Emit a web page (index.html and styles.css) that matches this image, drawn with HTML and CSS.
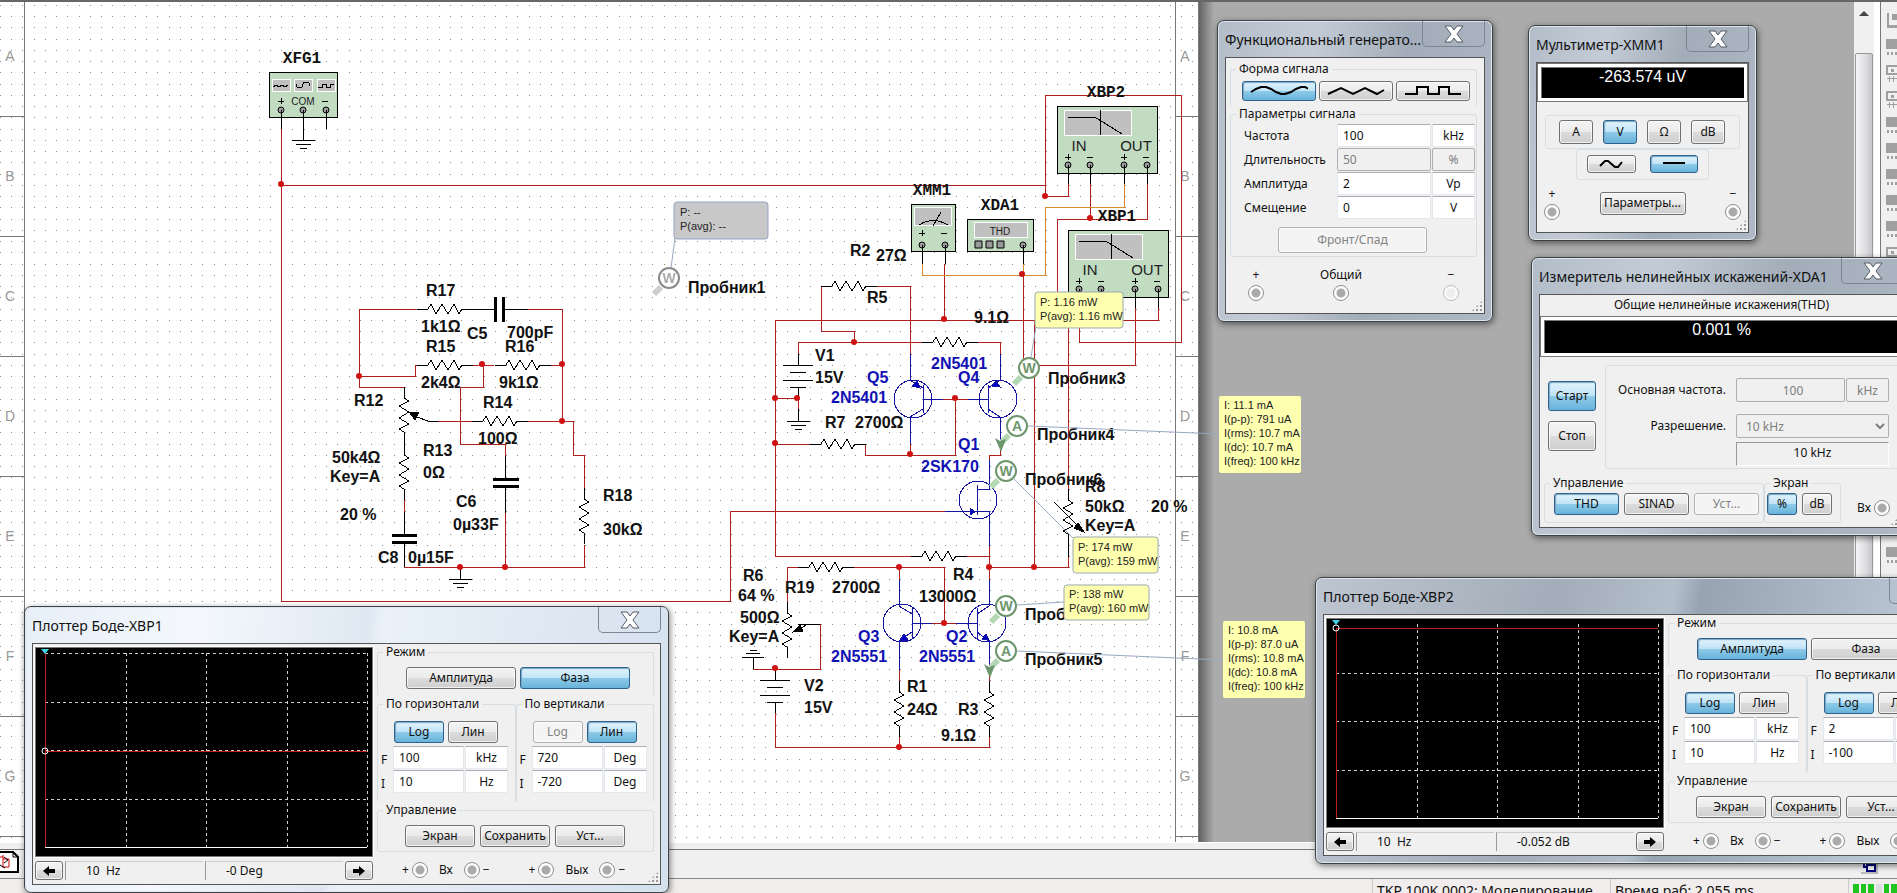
FILE: index.html
```
<!DOCTYPE html>
<html lang="ru">
<head>
    <meta charset="UTF-8">
    <meta name="viewport" content="width=device-width, initial-scale=1.0">
    <title>TKP 100K 0002</title>
    <link rel="stylesheet" href="styles.css">
</head>
<body>
    <div class="workspace">
        <main class="canvas">
            <svg class="schematic" width="1320" height="843" viewBox="0 0 1320 843">
                <defs>
                    <pattern id="dots" width="45" height="45" patternUnits="userSpaceOnUse">
                        <path class="dot" d="M0 5h1M11 5h1M22 5h1M34 5h1M0 16h1M11 16h1M22 16h1M34 16h1M0 27h1M11 27h1M22 27h1M34 27h1M0 39h1M11 39h1M22 39h1M34 39h1"/>
                    </pattern>
                    <linearGradient id="edge">
                        <stop offset="0" stop-color="#5e5e5e"/>
                        <stop offset="1" stop-color="#ababab"/>
                    </linearGradient>
                    <path id="rh" d="M-11 0H0l3-5 5 10 6-10 6 10 6-10 5 10 3-5h11"/>
                    <path id="rv" d="M0-11V0l5 3-10 5 10 6-10 6 10 6-10 5 5 3v11"/>
                    <g id="gnd"><path d="M0-12V0M-11 0h23M-7 4h15M-3 8h7"/></g>
                    <g id="batt"><path d="M0-11V0M-15 0h30M-8 7h16M-15 15h30M-8 22h16M0 22v11"/></g>
                    <g id="pin"><circle r="3" class="pin"/><path d="M0 0v19"/></g>
                    <g id="mag">
                        <path class="handle" d="M-8 9L-15 16"/>
                        <circle class="lens" r="10"/>
                    </g>
                    <g id="bode">
                        <rect class="inst" width="100" height="67"/>
                        <rect class="screen" x="7" y="4" width="67" height="25"/>
                        <path d="M11 11h26l4 2 24 15M43 4v25"/>
                        <path d="M8 51h6M11 48v6M30 51h6M64 51h6M67 48v6M86 51h6"/>
                        <use href="#pin" x="11" y="59"/>
                        <use href="#pin" x="33" y="59"/>
                        <use href="#pin" x="67" y="59"/>
                        <use href="#pin" x="90" y="59"/>
                    </g>
                </defs>

                <rect width="1198" height="843" fill="#fff"/>
                <rect width="1198" height="843" fill="url(#dots)"/>
                <rect x="1198" width="16" height="843" fill="url(#edge)"/>

                <!-- sheet frame -->
                <path class="frame" d="M24 2V836M0 116h24M0 236h24M0 356h24M0 476h24M0 596h24M0 716h24M0 836h24M1175 2V843M1175 116h23M1175 236h23M1175 356h23M1175 476h23M1175 596h23M1175 716h23M1175 836h23M1198 2V843"/>
                <g class="zone">
                    <text x="10" y="61">A</text><text x="10" y="181">B</text><text x="10" y="301">C</text><text x="10" y="421">D</text><text x="10" y="541">E</text><text x="10" y="661">F</text><text x="10" y="781">G</text>
                    <text x="1185" y="61">A</text><text x="1185" y="181">B</text><text x="1185" y="301">C</text><text x="1185" y="421">D</text><text x="1185" y="541">E</text><text x="1185" y="661">F</text><text x="1185" y="781">G</text>
                </g>

                <!-- instruments -->
                <g class="part">
                    <rect class="inst" x="269" y="72" width="68" height="45"/>
                    <rect class="screen" x="272" y="79" width="18" height="12"/>
                    <rect class="screen" x="294" y="79" width="18" height="12"/>
                    <rect class="screen" x="317" y="79" width="18" height="12"/>
                    <path d="M273 87l3-2 3 2 3-2 3 2 3-2M296 84q0 4 4 4q3 0 3-4q0-2 4-2q3 0 3 4M318 87h4v-3h4v3h4v-3h4M278 101h6M281 98v6M322 101h6"/>
                    <use href="#pin" x="281" y="110"/>
                    <use href="#pin" x="303" y="110"/>
                    <use href="#pin" x="326" y="110"/>
                    <use href="#gnd" x="303" y="140"/>

                    <rect class="inst" x="911" y="204" width="44" height="47"/>
                    <rect class="screen" x="914" y="207" width="37" height="18"/>
                    <path d="M919 225q14-9 29 0M933 226l8-14M919 233h6M922 230v6M941 233h6"/>
                    <use href="#pin" x="922" y="245"/>
                    <use href="#pin" x="945" y="245"/>

                    <rect class="inst" x="967" y="219" width="66" height="32"/>
                    <rect class="screen" x="974" y="222" width="53" height="15"/>
                    <path class="key" d="M975 241h7v7h-7zM986 241h7v7h-7zM997 241h7v7h-7z"/>
                    <use href="#pin" x="1023" y="245"/>

                    <use href="#bode" x="1057" y="106"/>
                    <use href="#bode" x="1068" y="230"/>
                </g>

                <!-- wires -->
                <g class="wire">
                    <path d="M281 129V601H730V511H946M281 185H1045"/>
                    <path d="M1181 95H1045V196H1068V184M1181 95V342H1079V308"/>
                    <path d="M1090 184V219M1057 310V219H1147V184M944 264V320M1158 308V320H775V556H911M1034 320V567M1068 300V490"/>
                    <path d="M1023 275V365H1135V308"/>
                    <path d="M821 286V331H854V342M877 286H910V354M798 354V342H923M977 342H1000V354"/>
                    <path d="M775 398H798V410M775 444H810M865 444V455H955V399M943 399H968M910 442V455"/>
                    <path d="M1000 446V455H989V470M967 556H989M989 546V580M989 567H1068V556M899 580V567H944V623M854 567H899M787 602V567H799M932 623H956"/>
                    <path d="M820 624V669H775M753 669H775M775 712V747H989V736M899 670V682M899 736V747M989 672V682"/>
                    <path d="M404 387H359V309H416M359 376H415V365H418M472 365H494M483 365V387H460V444H505V456M528 309H562V421H573V455H584V488M550 365H562M438 421H473M528 421H562M404 567H584V545M505 512V567M404 500V513"/>
                </g>
                <path class="wire orange" d="M922 264V275H1045V207H1124V184M1023 264V275"/>

                <!-- parts -->
                <g class="part">
                    <use href="#rh" x="428" y="309"/>
                    <use href="#rh" x="428" y="365"/>
                    <use href="#rh" x="506" y="365"/>
                    <use href="#rh" x="483" y="421"/>
                    <use href="#rv" x="404" y="398"/>
                    <use href="#rv" x="404" y="455"/>
                    <use href="#rv" x="584" y="499"/>
                    <path d="M461 309h34M504 309h24M404 432v23M404 512v22M404 543v24M505 456v22M505 487v26M414 416l14 5h10"/>
                    <path class="plate" d="M495 297v25M503 297v25M392 535h25M392 542h25M493 479h26M493 486h26"/>
                    <path class="tip" d="M409 412l10 0-4 8z"/>
                    <use href="#gnd" x="460" y="579"/>

                    <use href="#rh" x="832" y="286"/>
                    <use href="#rh" x="933" y="342"/>
                    <use href="#rh" x="821" y="444"/>
                    <use href="#rh" x="922" y="556"/>
                    <use href="#rh" x="809" y="567"/>
                    <use href="#rv" x="1068" y="500"/>
                    <use href="#rv" x="787" y="613"/>
                    <use href="#rv" x="899" y="692"/>
                    <use href="#rv" x="989" y="692"/>
                    <use href="#batt" x="798" y="365"/>
                    <use href="#batt" x="775" y="680"/>
                    <use href="#gnd" x="798" y="421"/>
                    <path d="M753 669v-11M742 657h22M746 653h14M750 650h7M798 624l10 0h12M808 624l-12 7M1068 545v12M1054 502l26 26"/>
                    <path class="tip" d="M793 632l7-7 3 6zM1084 532l-10-4 4-5z"/>
                </g>

                <!-- transistors -->
                <g class="semi">
                    <circle cx="913" cy="399" r="19"/>
                    <path d="M910 354V380L923 388M923 385V413M923 409L910 417V444M923 399H943"/>
                    <path class="tip" d="M912 386l8 2-3-7z"/>
                    <circle cx="998" cy="399" r="19"/>
                    <path d="M1000 354V380L988 388M988 385V413M988 409L1000 417V440M968 399H988"/>
                    <path class="tip" d="M992 386l8 1-4-6z"/>
                    <circle cx="978" cy="500" r="19"/>
                    <path d="M989 460V489H977M977 485V515M945 511H989V546"/>
                    <path class="tip" d="M970 508v7l5-3z"/>
                    <circle cx="902" cy="623" r="19"/>
                    <path d="M899 580V606L912 614M912 608V639M912 632L899 641V670M912 623H932"/>
                    <path class="tip" d="M900 640l8 0-4-6z"/>
                    <circle cx="987" cy="623" r="19"/>
                    <path d="M989 580V606L977 614M977 608V639M977 632L989 641V666M956 623H977"/>
                    <path class="tip" d="M989 640l-7-1 4-5z"/>
                </g>

                <g class="node">
                    <circle cx="281" cy="184" r="3"/><circle cx="359" cy="376" r="3"/><circle cx="482" cy="364" r="3"/><circle cx="562" cy="364" r="3"/><circle cx="562" cy="421" r="3"/><circle cx="460" cy="567" r="3"/><circle cx="505" cy="567" r="3"/>
                    <circle cx="1045" cy="196" r="3"/><circle cx="1090" cy="218" r="3"/><circle cx="1022" cy="274" r="3"/><circle cx="944" cy="319" r="3"/><circle cx="854" cy="342" r="3"/><circle cx="775" cy="398" r="3"/><circle cx="797" cy="398" r="3"/>
                    <circle cx="775" cy="443" r="3"/><circle cx="910" cy="454" r="3"/><circle cx="955" cy="398" r="3"/><circle cx="989" cy="567" r="3"/><circle cx="1034" cy="567" r="3"/><circle cx="899" cy="567" r="3"/><circle cx="944" cy="623" r="3"/><circle cx="775" cy="668" r="3"/><circle cx="899" cy="747" r="3"/>
                </g>

                <!-- captions -->
                <g class="mono">
                    <text x="302" y="63">XFG1</text>
                    <text x="932" y="195">XMM1</text>
                    <text x="1000" y="210">XDA1</text>
                    <text x="1106" y="97">XBP2</text>
                    <text x="1117" y="221">XBP1</text>
                </g>
                <g class="inst-text">
                    <text class="small" x="303" y="105">COM</text>
                    <text class="small" x="1000" y="235">THD</text>
                    <text x="1079" y="151">IN</text><text x="1136" y="151">OUT</text>
                    <text x="1090" y="275">IN</text><text x="1147" y="275">OUT</text>
                </g>
                <g class="label">
                    <text x="426" y="296">R17</text><text x="421" y="332">1k1Ω</text><text x="467" y="339">C5</text><text x="507" y="338">700pF</text>
                    <text x="426" y="352">R15</text><text x="505" y="352">R16</text><text x="421" y="388">2k4Ω</text><text x="499" y="388">9k1Ω</text>
                    <text x="354" y="406">R12</text><text x="483" y="408">R14</text><text x="478" y="444">100Ω</text><text x="423" y="456">R13</text>
                    <text x="423" y="478">0Ω</text><text x="332" y="463">50k4Ω</text><text x="330" y="482">Key=A</text><text x="340" y="520">20 %</text>
                    <text x="456" y="507">C6</text><text x="453" y="530">0µ33F</text><text x="378" y="563">C8</text><text x="408" y="563">0µ15F</text>
                    <text x="603" y="501">R18</text><text x="603" y="535">30kΩ</text>
                    <text x="850" y="256">R2</text><text x="876" y="261">27Ω</text><text x="867" y="303">R5</text><text x="974" y="323">9.1Ω</text>
                    <text x="815" y="361">V1</text><text x="815" y="383">15V</text><text x="825" y="428">R7</text><text x="855" y="428">2700Ω</text>
                    <text x="1085" y="492">R8</text><text x="1085" y="512">50kΩ</text><text x="1151" y="512">20 %</text><text x="1085" y="531">Key=A</text>
                    <text x="743" y="581">R6</text><text x="738" y="601">64 %</text><text x="740" y="623">500Ω</text><text x="729" y="642">Key=A</text>
                    <text x="785" y="593">R19</text><text x="832" y="593">2700Ω</text><text x="953" y="580">R4</text><text x="919" y="602">13000Ω</text>
                    <text x="804" y="691">V2</text><text x="804" y="713">15V</text><text x="907" y="692">R1</text><text x="907" y="715">24Ω</text>
                    <text x="958" y="715">R3</text><text x="941" y="741">9.1Ω</text>
                    <text x="688" y="293">Пробник1</text><text x="1048" y="384">Пробник3</text><text x="1037" y="440">Пробник4</text>
                    <text x="1025" y="485">Пробник6</text><text x="1025" y="620">Пробник2</text><text x="1025" y="665">Пробник5</text>
                </g>
                <g class="label blue">
                    <text x="867" y="383">Q5</text><text x="831" y="403">2N5401</text><text x="931" y="369">2N5401</text><text x="958" y="383">Q4</text>
                    <text x="958" y="450">Q1</text><text x="921" y="472">2SK170</text>
                    <text x="858" y="642">Q3</text><text x="831" y="662">2N5551</text><text x="946" y="642">Q2</text><text x="919" y="662">2N5551</text>
                </g>

                <!-- probes -->
                <path class="leader" d="M675 238L671 268M1036 327L1031 357M1028 426L1219 434M1014 479L1074 539M1017 605L1064 602M1017 651L1223 660"/>
                <g class="probe off">
                    <use href="#mag" x="669" y="278"/><text x="669" y="283">W</text>
                </g>
                <g class="probe">
                    <use href="#mag" x="1029" y="368"/><text x="1029" y="373">W</text>
                    <use href="#mag" x="1017" y="426"/><text x="1017" y="431">A</text>
                    <use href="#mag" x="1006" y="471"/><text x="1006" y="476">W</text>
                    <use href="#mag" x="1006" y="606"/><text x="1006" y="611">W</text>
                    <use href="#mag" x="1006" y="651"/><text x="1006" y="656">A</text>
                    <path class="dir" d="M995 438l5 3 6-2-5 13zM984 664l5 3 6-2-5 13z"/>
                </g>
                <g class="note">
                    <rect class="idle" x="674" y="202" width="94" height="37" rx="3"/>
                    <text x="680" y="216">P: --</text><text x="680" y="230">P(avg): --</text>
                    <rect x="1035" y="292" width="88" height="36" rx="3"/>
                    <text x="1040" y="306">P: 1.16 mW</text><text x="1040" y="320">P(avg): 1.16 mW</text>
                    <rect x="1073" y="537" width="85" height="36" rx="3"/>
                    <text x="1078" y="551">P: 174 mW</text><text x="1078" y="565">P(avg): 159 mW</text>
                    <rect x="1064" y="585" width="85" height="35" rx="3"/>
                    <text x="1069" y="598">P: 138 mW</text><text x="1069" y="612">P(avg): 160 mW</text>
                    <rect class="plain" x="1219" y="396" width="82" height="77" rx="2"/>
                    <text x="1224" y="409">I: 11.1 mA</text><text x="1224" y="423">I(p-p): 791 uA</text><text x="1224" y="437">I(rms): 10.7 mA</text><text x="1224" y="451">I(dc): 10.7 mA</text><text x="1224" y="465">I(freq): 100 kHz</text>
                    <rect class="plain" x="1223" y="621" width="82" height="77" rx="2"/>
                    <text x="1228" y="634">I: 10.8 mA</text><text x="1228" y="648">I(p-p): 87.0 uA</text><text x="1228" y="662">I(rms): 10.8 mA</text><text x="1228" y="676">I(dc): 10.8 mA</text><text x="1228" y="690">I(freq): 100 kHz</text>
                </g>
            </svg>
        </main>
        <div class="scrollbar">
            <svg width="10" height="6" viewBox="0 0 10 6"><path d="M0 6l5-5 5 5z" fill="#444"/></svg>
            <div class="thumb"></div>
        </div>
        <aside class="instruments">
            <svg width="16" height="560" viewBox="0 0 16 560">
                <defs>
                    <g id="tool"><path d="M0 0h16v10H0zM1 13h2v3H1zM5 13h2v3H5zM9 13h2v3H9z"/></g>
                    <g id="tool2"><path d="M0 0h12v2H2v6h10v2H0zM5 4h3v3H5zM1 13h16v1H1zM3 11h1v6H3zM7 11h1v6H7z"/></g>
                </defs>
                <g fill="#a0a0a0">
                    <path d="M1 0h2v12h12v3H1zM6 1h10v6H6z"/>
                    <use href="#tool" y="26"/><use href="#tool2" y="52"/><use href="#tool2" y="78"/><use href="#tool" y="104"/><use href="#tool" y="130"/><use href="#tool" y="156"/><use href="#tool" y="182"/><use href="#tool" y="208"/><use href="#tool2" y="234"/><use href="#tool" y="534"/>
                </g>
            </svg>
        </aside>
    </div>

    <div class="tabs">
        <svg width="20" height="22" viewBox="0 0 20 22">
            <path d="M0 1h13l5 5v15H0" fill="#fff" stroke="#000" stroke-width="2"/>
            <path d="M13 1v5h5" fill="none" stroke="#000"/>
            <path d="M3 4v13M3 8h6v8h-5M0 6h3" fill="none" stroke="#c00"/>
            <path d="M4 6l4 3-4 3M0 14l5 3" fill="none" stroke="#000"/>
        </svg>
        <svg class="restore" width="17" height="13" viewBox="0 0 17 13">
            <path d="M3 1h8M3 1v5h3M6 4h8v6H6z" fill="#fff" stroke="#00007b" stroke-width="2"/>
            <path d="M0 12h16M16 0v13" stroke="#888"/>
        </svg>
    </div>
    <footer class="status">
        <span class="cell name">TKP 100K 0002: Моделирование</span>
        <span class="cell time">Время раб: 2.055 ms</span>
        <span class="cell meter"><i></i><i></i><i></i><i class="empty"></i><i></i><i></i></span>
    </footer>

    <section class="window bode xbp1">
        <header class="titlebar">
            <h2>Плоттер Боде-XBP1</h2>
            <button class="close" aria-label="Закрыть"><svg width="20" height="18" viewBox="0 0 20 18"><path d="M1 1h6l3 4 3-4h6l-6 8 6 8h-6l-3-4-3 4H1l6-8z"/></svg></button>
        </header>
        <div class="client">
            <div class="plot-side">
                <div class="plot">
                    <svg width="334" height="206" viewBox="0 0 334 206">
                        <path class="grid" d="M89 4V198M169 4V198M250 4V198M330 4V198M8 4H330M8 53H330M8 101H330M8 150H330"/>
                        <path class="axis" d="M8 198H330"/>
                        <path class="trace" d="M8 4V198M8 102H330"/>
                        <path class="cursor" d="M4 0h8l-4 5z"/>
                        <circle class="mark" cx="8" cy="102" r="3"/>
                    </svg>
                </div>
                <div class="readout">
                    <button aria-label="Влево"><svg width="12" height="10" viewBox="0 0 12 10"><path d="M0 5l6-5v3h6v4H6v3z"/></svg></button>
                    <output class="freq">10&nbsp; Hz</output>
                    <output class="value">-0 Deg</output>
                    <button aria-label="Вправо"><svg width="12" height="10" viewBox="0 0 12 10"><path d="M12 5L6 0v3H0v4h6v3z"/></svg></button>
                </div>
            </div>
            <div class="controls">
                <fieldset class="mode">
                    <legend>Режим</legend>
                    <div class="buttons"><button>Амплитуда</button><button class="on">Фаза</button></div>
                </fieldset>
                <div class="axes">
                    <fieldset>
                        <legend>По горизонтали</legend>
                        <div class="buttons"><button class="on">Log</button><button>Лин</button></div>
                        <div class="range"><label for="b1hf">F</label><input id="b1hf" value="100"><input class="unit" aria-label="Единица" value="kHz"></div>
                        <div class="range"><label for="b1hi">I</label><input id="b1hi" value="10"><input class="unit" aria-label="Единица" value="Hz"></div>
                    </fieldset>
                    <fieldset>
                        <legend>По вертикали</legend>
                        <div class="buttons"><button disabled>Log</button><button class="on">Лин</button></div>
                        <div class="range"><label for="b1vf">F</label><input id="b1vf" value="720"><input class="unit" aria-label="Единица" value="Deg"></div>
                        <div class="range"><label for="b1vi">I</label><input id="b1vi" value="-720"><input class="unit" aria-label="Единица" value="Deg"></div>
                    </fieldset>
                </div>
                <fieldset class="manage">
                    <legend>Управление</legend>
                    <div class="buttons"><button>Экран</button><button>Сохранить</button><button>Уст...</button></div>
                </fieldset>
                <div class="ports">
                    <span class="port">+<i class="jack"></i></span><span>Вх</span><span class="port"><i class="jack"></i>−</span>
                    <span class="port second">+<i class="jack"></i></span><span>Вых</span><span class="port"><i class="jack"></i>−</span>
                </div>
            </div>
        </div>
    </section>

    <section class="window xfg">
        <header class="titlebar">
            <h2>Функциональный генерато...</h2>
            <button class="close" aria-label="Закрыть"><svg width="20" height="18" viewBox="0 0 20 18"><path d="M1 1h6l3 4 3-4h6l-6 8 6 8h-6l-3-4-3 4H1l6-8z"/></svg></button>
        </header>
        <div class="client">
            <fieldset class="shape">
                <legend>Форма сигнала</legend>
                <div class="buttons">
                    <button class="on" aria-label="Синус"><svg width="58" height="10" viewBox="0 0 58 10"><path d="M1 6l5-3 5-2h5l5 2 5 3 5 2h4l6-2 5-3 5-2h4l4 2 3 2"/></svg></button>
                    <button aria-label="Треугольник"><svg width="58" height="10" viewBox="0 0 58 10"><path d="M1 8l13-6 12 6 12-6 12 6 7-4"/></svg></button>
                    <button aria-label="Прямоугольник"><svg width="58" height="10" viewBox="0 0 58 10"><path d="M1 8h12V1h11v7h11V1h10v7h12"/></svg></button>
                </div>
            </fieldset>
            <fieldset class="params">
                <legend>Параметры сигнала</legend>
                <div class="row"><label for="freq">Частота</label><input id="freq" value="100"><input class="unit" aria-label="Единица" value="kHz"></div>
                <div class="row"><label for="duty">Длительность</label><input id="duty" value="50" disabled><input class="unit" aria-label="Единица" value="%" disabled></div>
                <div class="row"><label for="amp">Амплитуда</label><input id="amp" value="2"><input class="unit" aria-label="Единица" value="Vp"></div>
                <div class="row"><label for="offset">Смещение</label><input id="offset" value="0"><input class="unit" aria-label="Единица" value="V"></div>
                <button class="wide" disabled>Фронт/Спад</button>
            </fieldset>
            <div class="terminals">
                <span class="terminal">+<i class="jack"></i></span>
                <span class="terminal common">Общий<i class="jack"></i></span>
                <span class="terminal">−<i class="jack free"></i></span>
            </div>
        </div>
    </section>

    <section class="window xmm">
        <header class="titlebar">
            <h2>Мультиметр-XMM1</h2>
            <button class="close" aria-label="Закрыть"><svg width="20" height="18" viewBox="0 0 20 18"><path d="M1 1h6l3 4 3-4h6l-6 8 6 8h-6l-3-4-3 4H1l6-8z"/></svg></button>
        </header>
        <div class="client">
            <output class="display">-263.574 uV</output>
            <div class="box units"><button>A</button><button class="on">V</button><button>Ω</button><button>dB</button></div>
            <div class="box signal">
                <button aria-label="Переменный"><svg width="24" height="10" viewBox="0 0 24 10"><path d="M1 7l5-5h3l7 6h3l4-5"/></svg></button>
                <button class="on" aria-label="Постоянный"><svg width="24" height="10" viewBox="0 0 24 10"><path d="M1 4h22"/></svg></button>
            </div>
            <div class="terminals">
                <span class="terminal">+<i class="jack"></i></span>
                <button>Параметры...</button>
                <span class="terminal">−<i class="jack"></i></span>
            </div>
        </div>
    </section>

    <section class="window xda">
        <header class="titlebar">
            <h2>Измеритель нелинейных искажений-XDA1</h2>
            <button class="close" aria-label="Закрыть"><svg width="20" height="18" viewBox="0 0 20 18"><path d="M1 1h6l3 4 3-4h6l-6 8 6 8h-6l-3-4-3 4H1l6-8z"/></svg></button>
        </header>
        <div class="client">
            <div class="caption">Общие нелинейные искажения(THD)</div>
            <output class="display">0.001 %</output>
            <div class="middle">
                <div class="run"><button class="on">Старт</button><button>Стоп</button></div>
                <div class="box settings">
                    <div class="row"><label for="base">Основная частота.</label><input id="base" value="100" disabled><input class="unit" aria-label="Единица" value="kHz" disabled></div>
                    <div class="row"><label for="res">Разрешение.</label><select id="res" disabled><option>10 kHz</option></select></div>
                    <output class="actual">10 kHz</output>
                </div>
            </div>
            <div class="bottom">
                <fieldset class="kind">
                    <legend>Управление</legend>
                    <div class="buttons"><button class="on">THD</button><button>SINAD</button><button disabled>Уст...</button></div>
                </fieldset>
                <fieldset class="screen-unit">
                    <legend>Экран</legend>
                    <div class="buttons"><button class="on">%</button><button>dB</button></div>
                </fieldset>
                <span class="port">Вх<i class="jack"></i></span>
            </div>
        </div>
    </section>

    <section class="window bode xbp2">
        <header class="titlebar">
            <h2>Плоттер Боде-XBP2</h2>
            <button class="close" aria-label="Закрыть"><svg width="20" height="18" viewBox="0 0 20 18"><path d="M1 1h6l3 4 3-4h6l-6 8 6 8h-6l-3-4-3 4H1l6-8z"/></svg></button>
        </header>
        <div class="client">
            <div class="plot-side">
                <div class="plot">
                    <svg width="334" height="206" viewBox="0 0 334 206">
                        <path class="grid" d="M89 4V198M169 4V198M250 4V198M330 4V198M8 53H330M8 101H330M8 150H330"/>
                        <path class="axis" d="M8 198H330"/>
                        <path class="trace" d="M8 8V198M8 8H330"/>
                        <path class="cursor" d="M4 0h8l-4 5z"/>
                        <circle class="mark" cx="8" cy="8" r="3"/>
                    </svg>
                </div>
                <div class="readout">
                    <button aria-label="Влево"><svg width="12" height="10" viewBox="0 0 12 10"><path d="M0 5l6-5v3h6v4H6v3z"/></svg></button>
                    <output class="freq">10&nbsp; Hz</output>
                    <output class="value">-0.052 dB</output>
                    <button aria-label="Вправо"><svg width="12" height="10" viewBox="0 0 12 10"><path d="M12 5L6 0v3H0v4h6v3z"/></svg></button>
                </div>
            </div>
            <div class="controls">
                <fieldset class="mode">
                    <legend>Режим</legend>
                    <div class="buttons"><button class="on">Амплитуда</button><button>Фаза</button></div>
                </fieldset>
                <div class="axes">
                    <fieldset>
                        <legend>По горизонтали</legend>
                        <div class="buttons"><button class="on">Log</button><button>Лин</button></div>
                        <div class="range"><label for="b2hf">F</label><input id="b2hf" value="100"><input class="unit" aria-label="Единица" value="kHz"></div>
                        <div class="range"><label for="b2hi">I</label><input id="b2hi" value="10"><input class="unit" aria-label="Единица" value="Hz"></div>
                    </fieldset>
                    <fieldset>
                        <legend>По вертикали</legend>
                        <div class="buttons"><button class="on">Log</button><button>Лин</button></div>
                        <div class="range"><label for="b2vf">F</label><input id="b2vf" value="2"><input class="unit" aria-label="Единица" value="dB"></div>
                        <div class="range"><label for="b2vi">I</label><input id="b2vi" value="-100"><input class="unit" aria-label="Единица" value="dB"></div>
                    </fieldset>
                </div>
                <fieldset class="manage">
                    <legend>Управление</legend>
                    <div class="buttons"><button>Экран</button><button>Сохранить</button><button>Уст...</button></div>
                </fieldset>
                <div class="ports">
                    <span class="port">+<i class="jack"></i></span><span>Вх</span><span class="port"><i class="jack"></i>−</span>
                    <span class="port second">+<i class="jack"></i></span><span>Вых</span><span class="port"><i class="jack"></i>−</span>
                </div>
            </div>
        </div>
    </section>
</body>
</html>
```

FILE: styles.css
```
* {
    box-sizing: border-box;
    margin: 0;
    padding: 0;
}

body {
    display: flex;
    flex-direction: column;
    height: 100vh;
    overflow: hidden;
    position: relative;
    background: #f0f0f0;
    color: #111;
    font: 12px/16px "Noto Sans", sans-serif;
}

svg {
    display: block;
}

/* workspace */
.workspace {
    flex: 1;
    display: flex;
    min-height: 0;
    border-top: 2px solid #666;
    border-bottom: 1px solid #fff;
}

.canvas {
    flex: 1;
    min-width: 0;
    overflow: hidden;
    background: #ababab;
}

.schematic {
    margin-top: -2px;
}

.scrollbar {
    display: flex;
    flex-direction: column;
    align-items: center;
    gap: 37px;
    width: 20px;
    padding: 8px 1px 0;
    background: #f0f0f0;
}

.thumb {
    flex: 1;
    width: 18px;
    border: 1px solid #999;
    border-radius: 2px;
    background: linear-gradient(90deg, #f5f5f5, #e4e4e8 45%, #c6c6cc);
}

.instruments {
    width: 23px;
    padding: 11px 0 0 6px;
    background: #f0f0f0;
    border-left: 6px solid #fff;
    box-shadow: inset 1px 0 #777;
    overflow: hidden;
}

.tabs {
    display: flex;
    justify-content: space-between;
    height: 36px;
    padding: 2px 19px 0 0;
    border-top: 6px solid #f0f0f0;
    border-bottom: 1px solid #888;
    box-shadow: inset 0 1px #777;
}

.restore {
    margin-top: 10px;
}

.status {
    display: flex;
    justify-content: flex-end;
    height: 14px;
    overflow: hidden;
    background: #f0edec;
    font-size: 14px;
    line-height: 24px;
}

.cell {
    border-left: 1px solid #ccc;
    padding-left: 4px;
    white-space: nowrap;
}

.cell.name {
    width: 238px;
}

.cell.time {
    width: 238px;
}

.cell.meter {
    display: flex;
    gap: 2px;
    width: 49px;
    padding-top: 5px;
}

.meter i {
    width: 6px;
    height: 12px;
    background: #1fc41f;
}

.meter .empty {
    background: #ddd;
}

/* schematic */
.dot {
    stroke: #8c8c8c;
    shape-rendering: crispEdges;
}

.frame {
    stroke: #777;
    fill: none;
    shape-rendering: crispEdges;
}

.zone text {
    font: 14px "Liberation Sans", sans-serif;
    fill: #999;
    text-anchor: middle;
}

.wire {
    fill: none;
    stroke: #b01e1e;
    shape-rendering: crispEdges;
}

.wire.orange {
    stroke: #d68a2c;
}

.part {
    fill: none;
    stroke: #000;
    shape-rendering: crispEdges;
}

.part .plate {
    stroke-width: 3px;
}

.part .tip {
    fill: #000;
}

.inst {
    fill: #c1dcc1;
    stroke: #000;
    stroke-width: 1px;
}

.screen {
    fill: #c0c0c0;
    stroke: #fff;
}

.part .key,
.pin {
    fill: #999;
    stroke: #000;
    shape-rendering: auto;
}

.semi circle,
.semi path {
    fill: none;
    stroke: #1414a0;
    shape-rendering: crispEdges;
}

.semi .tip {
    fill: #0000c8;
}

.node {
    fill: #cf1212;
}

.label text {
    font: bold 16px "Liberation Sans", sans-serif;
    fill: #111;
}

.label.blue text {
    fill: #1111b4;
}

.mono text {
    font: bold 16px "Liberation Mono", monospace;
    fill: #111;
    text-anchor: middle;
}

.inst-text text {
    font: 15px "Liberation Sans", sans-serif;
    fill: #222;
    text-anchor: middle;
}

.inst-text .small {
    font-size: 10px;
}

.leader {
    stroke: #9aa9c4;
}

.handle {
    stroke: #b4d8b4;
    stroke-width: 6px;
}

.lens {
    fill: #fff;
    stroke: #6d966d;
    stroke-width: 2px;
}

.probe text {
    font: bold 14px "Liberation Sans", sans-serif;
    fill: #6d966d;
    text-anchor: middle;
}

.dir {
    fill: #6d966d;
}

.probe.off {
    filter: grayscale(1);
}

.probe.off text {
    fill: #aaa;
}

.note rect {
    fill: #ffffb0;
    stroke: #9aa9b0;
}

.note .plain {
    stroke: none;
}

.note .idle {
    fill: #c8c8c8;
    stroke: #93a4c8;
}

.note text {
    font: 11px "Liberation Sans", sans-serif;
    fill: #222;
}

/* tool windows */
.window {
    position: absolute;
    padding: 0 7px 7px;
    border: 1px solid #3d4247;
    border-radius: 7px;
    background: linear-gradient(100deg, #b3bdc9, #c3ccd6 30%, #a3adb9 60%, #aeb9c5);
    box-shadow: inset 0 0 0 1px #dfe6ee, 1px 2px 6px rgba(0, 0, 0, .5);
}

.titlebar {
    display: flex;
    justify-content: space-between;
    height: 36px;
    white-space: nowrap;
}

.titlebar h2 {
    font: 14px/38px "Noto Sans", sans-serif;
}

.close {
    display: flex;
    align-items: center;
    justify-content: center;
    flex: none;
    width: 63px;
    height: 26px;
    border: 1px solid #7c8590;
    border-top: 0;
    border-radius: 0 0 5px 5px;
    background: none;
}

.close path {
    fill: #fff;
    stroke: #555b63;
}

.client {
    position: relative;
    border: 1px solid #555;
    background: #f0f0f0;
}

/* resize grip */
.client::after {
    content: "";
    position: absolute;
    right: 1px;
    bottom: 1px;
    width: 12px;
    height: 12px;
    background: radial-gradient(#999 1px, transparent 0) 0 0 / 4px 4px;
    clip-path: polygon(100% 0, 100% 100%, 0 100%);
}

.client button {
    border: 1px solid #707070;
    border-radius: 3px;
    background: linear-gradient(#f3f3f3, #ebebeb 50%, #dcdcdc 50%, #cfcfcf);
    box-shadow: inset 0 0 0 1px rgba(255, 255, 255, .7);
    color: #111;
    font: inherit;
    white-space: nowrap;
    display: flex;
    align-items: center;
    justify-content: center;
}

.client button.on {
    border: 1px solid #2c628b;
    background: linear-gradient(#e2f3fc, #bfe3f6 50%, #8fcbe9 50%, #68b3db);
    box-shadow: inset 1px 1px 1px #7ba6c4;
}

.client button:disabled {
    border-color: #adb2b5;
    background: #f4f4f4;
    color: #838383;
}

.client button path {
    fill: none;
    stroke: #000;
    stroke-width: 2px;
}

.client .readout button path {
    fill: #000;
    stroke: none;
}

fieldset {
    min-width: 0;
    border: 1px solid #d8dde2;
    border-radius: 3px;
}

legend {
    margin-left: 5px;
    padding: 0 3px;
    line-height: 16px;
}

input,
select {
    min-width: 0;
    border: 1px solid #e3e9ef;
    border-top-color: #abadb3;
    background: #fff;
    color: #111;
    font: inherit;
    padding-left: 5px;
}

input:disabled,
select:disabled {
    border: 1px solid #afafaf;
    border-radius: 2px;
    background: #f0f0f0;
    color: #7d7d7d;
    opacity: 1;
}

.unit {
    padding: 0;
    text-align: center;
}

.buttons {
    display: flex;
}

.box {
    border: 1px solid #d5dfe5;
    border-radius: 3px;
}

.jack {
    display: inline-block;
    width: 16px;
    height: 16px;
    border: 1px solid #8e8e8e;
    border-radius: 50%;
    background: radial-gradient(circle, #aaa 0 4px, #fff 5px);
}

.jack.free {
    border-color: #bbb;
    background: radial-gradient(circle, #eee 0 4px, #fff 6px);
}

.display {
    display: block;
    border: 3px solid #fff;
    outline: 1px solid #777;
    background: #000;
    color: #fff;
    font: 16px/20px "Liberation Sans", sans-serif;
    text-align: center;
    box-shadow: inset 1px 1px #777;
}

/* bode plotters */
.bode {
    width: 645px;
}

.xbp1 {
    left: 24px;
    top: 606px;
    background: linear-gradient(100deg, #e6eef7, #f4f8fc 25%, #dfe8f2 50%, #eaf1f8 52%, #d4e0ee);
}

.xbp2 {
    left: 1315px;
    top: 577px;
    background: linear-gradient(100deg, #bcc5d0, #a3adb9 35%, #b4bfcc 52%, #97a3b1 56%, #c8d4e2);
}

.bode .client {
    display: flex;
    gap: 4px;
    height: 242px;
    padding: 3px 0 0 2px;
}

.plot-side {
    width: 338px;
}

.plot {
    border: 1px solid #777;
    outline: 1px solid #fff;
    padding: 1px;
    background: #000;
}

.grid,
.axis,
.trace {
    fill: none;
    stroke: #d0d0d0;
    stroke-dasharray: 3 3;
    shape-rendering: crispEdges;
}

.axis {
    stroke: #fff;
    stroke-dasharray: none;
}

.trace {
    stroke: #c42020;
    stroke-dasharray: none;
}

.cursor {
    fill: #3fd3e3;
}

.mark {
    fill: none;
    stroke: #fff;
}

.readout {
    display: flex;
    gap: 2px;
    margin-top: 4px;
}

.readout button {
    width: 28px;
    height: 19px;
}

.readout output {
    flex: 1;
    border-left: 1px solid #999;
    border-top: 1px solid #ccc;
    line-height: 17px;
}

.readout .freq,
.readout .value {
    padding-left: 20px;
}

.controls {
    width: 277px;
    margin-top: -3px;
}

.mode {
    height: 52px;
    border-bottom: 0;
}

.mode .buttons {
    gap: 4px;
    padding: 7px 0 0 28px;
}

.mode button {
    width: 110px;
    height: 22px;
}

.axes {
    display: flex;
}

.axes fieldset {
    flex: 1;
    height: 106px;
    border-bottom: 0;
}

.axes .buttons {
    gap: 4px;
    padding: 9px 0 2px 16px;
}

.axes button {
    width: 50px;
    height: 22px;
}

.range {
    display: grid;
    grid-template-columns: 11px 71px 43px;
    gap: 1px;
    margin: 1px 0 0 3px;
}

.range label {
    padding-top: 6px;
}

.range input {
    height: 23px;
}

.manage {
    height: 50px;
}

.manage .buttons {
    gap: 5px;
    padding: 7px 0 0 27px;
}

.manage button {
    width: 70px;
    height: 22px;
}

.ports {
    display: flex;
    align-items: center;
    gap: 11px;
    padding: 10px 0 0 25px;
}

.port {
    display: flex;
    align-items: center;
    gap: 3px;
}

.port.second {
    margin-left: 28px;
}

/* function generator */
.xfg {
    left: 1217px;
    top: 20px;
    width: 276px;
}

.xfg .client {
    height: 257px;
    padding: 3px 7px 0 4px;
}

.shape {
    height: 45px;
    border-bottom: 0;
}

.shape .buttons {
    gap: 3px;
    padding: 4px 0 0 11px;
}

.shape button {
    width: 74px;
    height: 20px;
}

.params {
    height: 151px;
}

.params .row {
    display: grid;
    grid-template-columns: 92px 94px 43px;
    gap: 1px;
    height: 23px;
    margin: 0 0 1px 13px;
    align-items: center;
}

.params .row input {
    height: 23px;
}

.params legend {
    margin-bottom: 2px;
}

.params .wide {
    width: 149px;
    height: 26px;
    margin: 8px 0 0 47px;
}

.xfg .terminals {
    display: flex;
    justify-content: space-between;
    padding: 10px 18px 0;
}

.terminal {
    display: flex;
    flex-direction: column;
    align-items: center;
    gap: 2px;
}

.terminal.common {
    margin-right: 25px;
}

/* multimeter */
.xmm {
    left: 1528px;
    top: 25px;
    width: 229px;
}

.xmm .client {
    height: 171px;
    padding: 1px;
}

.xmm .display {
    height: 37px;
}

.xmm .box {
    display: flex;
}

.units {
    gap: 10px;
    height: 34px;
    margin: 14px 7px 0;
    padding: 4px 13px;
}

.units button {
    width: 34px;
}

.signal {
    gap: 14px;
    width: 133px;
    height: 31px;
    margin: 0 0 0 38px;
    padding: 5px 10px 6px;
}

.signal button {
    width: 49px;
}

.xmm .terminals {
    display: flex;
    justify-content: space-between;
    align-items: center;
    padding: 6px;
}

.xmm .terminals button {
    width: 86px;
    height: 23px;
}

/* distortion analyzer */
.xda {
    left: 1531px;
    top: 257px;
    width: 381px;
}

.xda .client {
    height: 234px;
}

.caption {
    height: 22px;
    line-height: 20px;
    text-align: center;
}

.xda .display {
    height: 39px;
    margin: 0 1px;
}

.middle {
    display: flex;
    gap: 9px;
    padding: 9px 0 0 8px;
}

.run {
    display: flex;
    flex-direction: column;
    gap: 10px;
    padding-top: 16px;
}

.run button {
    width: 48px;
    height: 30px;
}

.settings {
    flex: 1;
    height: 104px;
    padding: 12px 13px 0 0;
}

.settings .row {
    display: flex;
    gap: 1px;
    justify-content: flex-end;
    margin-bottom: 12px;
}

.settings label {
    margin-right: 9px;
    line-height: 24px;
}

.settings input {
    width: 109px;
    height: 24px;
    text-align: center;
}

.settings .unit {
    width: 43px;
}

.settings select {
    width: 153px;
    height: 24px;
}

.actual {
    display: block;
    width: 153px;
    height: 24px;
    margin: -8px 0 0 auto;
    border: 1px solid #fff;
    border-top-color: #999;
    border-left-color: #999;
    text-align: center;
    line-height: 20px;
}

.bottom {
    display: flex;
    padding: 6px 0 0 4px;
}

.bottom fieldset {
    height: 48px;
}

.bottom .buttons {
    gap: 5px;
    padding: 2px 0 0 9px;
}

.kind {
    width: 220px;
}

.kind button {
    width: 65px;
    height: 22px;
}

.screen-unit {
    width: 77px;
}

.screen-unit .buttons {
    padding-left: 2px;
}

.screen-unit button {
    width: 30px;
    height: 22px;
}

.bottom .port {
    margin: 18px 0 0 16px;
}
```
